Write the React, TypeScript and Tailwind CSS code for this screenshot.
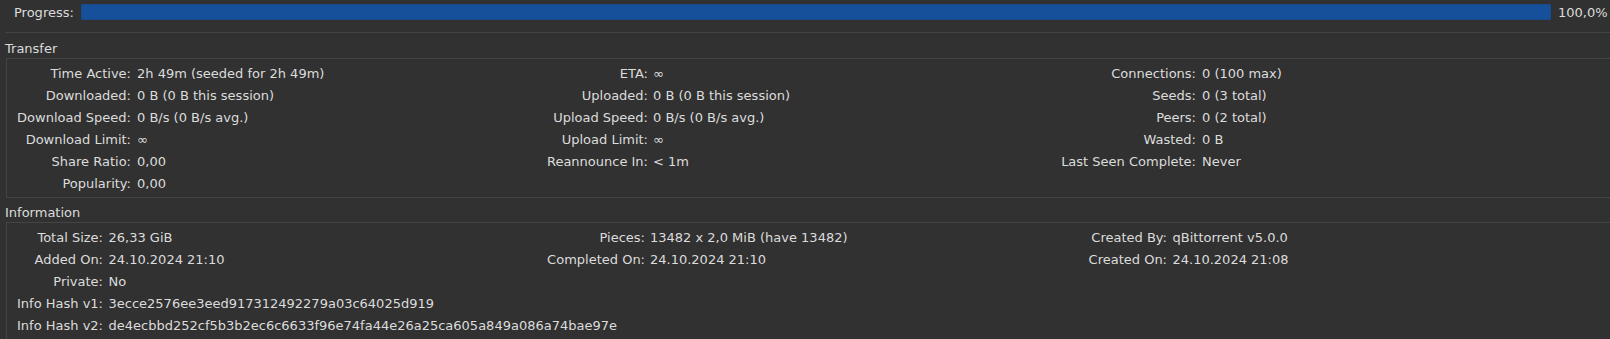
import React from "react";

type Row = string[];

const transfer: Row[] = [
  ["Time Active:", "2h 49m (seeded for 2h 49m)", "ETA:", "∞", "Connections:", "0 (100 max)"],
  ["Downloaded:", "0 B (0 B this session)", "Uploaded:", "0 B (0 B this session)", "Seeds:", "0 (3 total)"],
  ["Download Speed:", "0 B/s (0 B/s avg.)", "Upload Speed:", "0 B/s (0 B/s avg.)", "Peers:", "0 (2 total)"],
  ["Download Limit:", "∞", "Upload Limit:", "∞", "Wasted:", "0 B"],
  ["Share Ratio:", "0,00", "Reannounce In:", "< 1m", "Last Seen Complete:", "Never"],
  ["Popularity:", "0,00", "", "", "", ""],
];

const info: Row[] = [
  ["Total Size:", "26,33 GiB", "Pieces:", "13482 x 2,0 MiB (have 13482)", "Created By:", "qBittorrent v5.0.0"],
  ["Added On:", "24.10.2024 21:10", "Completed On:", "24.10.2024 21:10", "Created On:", "24.10.2024 21:08"],
  ["Private:", "No", "", "", "", ""],
  ["Info Hash v1:", "3ecce2576ee3eed917312492279a03c64025d919", "", "", "", ""],
  ["Info Hash v2:", "de4ecbbd252cf5b3b2ec6c6633f96e74fa44e26a25ca605a849a086a74bae97e", "", "", "", ""],
];

function Cells({ rows, valuePads }: { rows: Row[]; valuePads: string[] }) {
  return (
    <>
      {rows.map((r, i) =>
        r.map((t, j) =>
          j % 2 === 0 ? (
            <div key={`${i}-${j}`} className="text-right whitespace-nowrap">
              {t}
            </div>
          ) : (
            <div key={`${i}-${j}`} className={`whitespace-nowrap ${valuePads[(j - 1) / 2]}`}>
              {t}
            </div>
          )
        )
      )}
    </>
  );
}

export default function App() {
  return (
    <div
      className="w-[1610px] h-[339px] overflow-hidden bg-[#313131] text-[#dcdcdc] text-[13px]"
      style={{ fontFamily: '"DejaVu Sans", "Liberation Sans", sans-serif' }}
    >
      {/* Progress */}
      <div className="flex items-start pt-[4px] h-[20px]">
        <div className="w-[81px] pl-[14px] leading-[16px] pt-[1px] whitespace-nowrap">Progress:</div>
        <div className="w-[1470px] h-[16px] bg-[#16509b] border border-[#1a4a88]" />
        <div className="pl-[7px] leading-[16px] pt-[1px] whitespace-nowrap">100,0%</div>
      </div>
      <div className="mt-[12px] ml-[5px] h-px bg-[#444444]" />

      {/* Transfer */}
      <div className="mt-[8px] ml-[5px] leading-[15px]">Transfer</div>
      <div className="mt-[2px] ml-[6px] border-t border-l border-b border-[#444444] pt-[4px] pb-[2px]">
        <div className="grid grid-cols-[124px_367px_150px_388px_160px_1fr] auto-rows-[22px] leading-[22px]">
          <Cells rows={transfer} valuePads={["pl-[6px]", "pl-[5px]", "pl-[6px]"]} />
        </div>
      </div>

      {/* Information */}
      <div className="mt-[7px] ml-[5px] leading-[15px]">Information</div>
      <div className="mt-[2px] ml-[6px] border-t border-l border-b border-[#444444] pt-[4px] pb-[2px]">
        <div className="grid grid-cols-[96px_392px_150px_372px_150px_1fr] auto-rows-[22px] leading-[22px]">
          <Cells rows={info} valuePads={["pl-[5.5px]", "pl-[5px]", "pl-[5.5px]"]} />
        </div>
      </div>
    </div>
  );
}
